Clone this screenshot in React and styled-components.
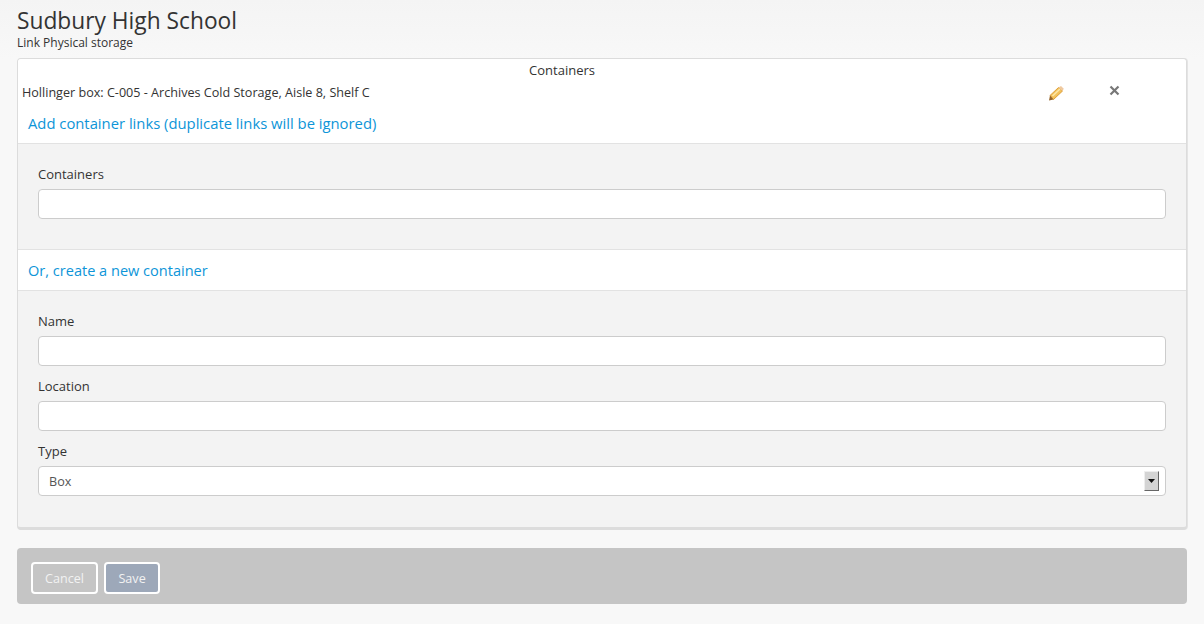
import React from 'react';
import styled, { createGlobalStyle } from 'styled-components';

const GlobalStyle = createGlobalStyle`
  html, body {
    margin: 0;
    padding: 0;
    height: 100%;
    background: #f8f8f8;
  }
  body {
    font-family: "Open Sans", "Liberation Sans", sans-serif;
    font-size: 12px;
    color: #333;
  }
`;

const Page = styled.div`
  box-sizing: border-box;
  height: 624px;
  padding: 6px 17px 0;
  background: linear-gradient(180deg, #f4f4f4 0, #f8f8f8 60px);
  overflow: hidden;
`;

const Title = styled.h1`
  margin: 0;
  font-size: 22.75px;
  font-weight: 400;
  line-height: 30px;
  color: #333;
`;

const Subtitle = styled.div`
  font-size: 12px;
  line-height: 14px;
  margin-bottom: 8px;
`;

const Card = styled.div`
  box-sizing: border-box;
  height: 472px;
  background: #f3f3f3;
  border: 1px solid #dcdcdc;
  border-bottom-width: 3px;
  border-right-width: 1px;
  box-shadow: 1px 0 0 #e4e4e4;
  border-radius: 4px;
  overflow: hidden;
`;

const LinkTable = styled.div`
  display: grid;
  grid-template-columns: 1020px 68px 1fr;
  background: #fff;
`;

const TableHead = styled.div`
  grid-column: 1 / 3;
  text-align: center;
  font-size: 13px;
  line-height: 22px;
`;

const Spacer = styled.div``;

const Cell = styled.div`
  display: flex;
  align-items: center;
  height: 22px;
  padding-left: ${(p) => p.$pad || 0}px;
  font-size: 12.6px;
`;

const Section = styled.div`
  background: #fff;
  color: #0d95d8;
  font-size: ${(p) => p.$size || 14.8}px;
  line-height: 19px;
  padding: ${(p) => p.$top}px 10px ${(p) => p.$bottom}px;
  border-bottom: 1px solid #e2e2e2;
  border-top: ${(p) => (p.$ruled ? '1px solid #e2e2e2' : 'none')};
`;

const Fieldset = styled.div`
  padding: ${(p) => p.$top}px 20px ${(p) => p.$bottom}px;
`;

const Label = styled.label`
  display: block;
  font-size: 13px;
  line-height: 18px;
  margin-bottom: 6px;
`;

const Field = styled.div`
  margin-bottom: ${(p) => p.$gap || 0}px;
`;

const Input = styled.input`
  display: block;
  box-sizing: border-box;
  width: 100%;
  height: 30px;
  border: 1px solid #ccc;
  border-radius: 4px;
  background: #fff;
  outline: none;
`;

const SelectBox = styled.div`
  box-sizing: border-box;
  display: flex;
  align-items: center;
  justify-content: space-between;
  height: 30px;
  padding: 0 6px 0 10px;
  border: 1px solid #ccc;
  border-radius: 4px;
  background: #fff;
  font-size: 12.6px;
  color: #555;
`;

const SelectArrow = styled.span`
  box-sizing: border-box;
  display: flex;
  align-items: center;
  justify-content: center;
  width: 15px;
  height: 20px;
  background: #d4d4d4;
  border-style: solid;
  border-width: 1px;
  border-color: #eee #666 #666 #eee;
`;

const ActionBar = styled.div`
  box-sizing: border-box;
  display: flex;
  gap: 6px;
  height: 56px;
  margin-top: 18px;
  padding: 14px 14px;
  background: #c5c5c5;
  border-radius: 4px;
`;

const Button = styled.button`
  box-sizing: border-box;
  height: 32px;
  padding: 0 ${(p) => (p.$primary ? 12.5 : 12)}px;
  border: 2px solid #fff;
  border-radius: 4px;
  background: ${(p) => (p.$primary ? '#9da8b9' : 'transparent')};
  color: #f2f2f2;
  font-family: inherit;
  font-size: 12.6px;
`;

const CloseIcon = styled.svg`
  margin-bottom: 3px;
`;

const PencilIcon = styled.svg`
  margin-top: 2px;
`;

const Pencil = () => (
  <PencilIcon width="16" height="16" viewBox="0 0 16 16">
    <path d="M2 10.5 L10.5 2.5 L14.5 6 L5.5 14.5 Z" fill="#f3c25c" stroke="#dd9f38" strokeWidth="1" />
    <path d="M4.5 11 L12 4" stroke="#fce7a8" strokeWidth="1.6" />
    <path d="M2 10.5 L5.5 14.5 L1 15.5 Z" fill="#95642a" />
    <path d="M10.5 2.5 L13 1 L15.8 3.8 L14.5 6 Z" fill="#efc9a0" />
  </PencilIcon>
);

const Close = () => (
  <CloseIcon width="11" height="11" viewBox="0 0 11 11">
    <path d="M1.5 1.5 L9.5 9.5 M9.5 1.5 L1.5 9.5" stroke="#777" strokeWidth="2.2" />
  </CloseIcon>
);

const App = () => (
  <>
    <GlobalStyle />
    <Page>
      <Title>Sudbury High School</Title>
      <Subtitle>Link Physical storage</Subtitle>
      <Card>
        <LinkTable>
          <TableHead>Containers</TableHead>
          <Spacer />
          <Cell $pad={4}>Hollinger box: C-005 - Archives Cold Storage, Aisle 8, Shelf C</Cell>
          <Cell $pad={10}><Pencil /></Cell>
          <Cell $pad={3}><Close /></Cell>
        </LinkTable>
        <Section $top={11} $bottom={10}>Add container links (duplicate links will be ignored)</Section>
        <Fieldset $top={21} $bottom={30}>
          <Field>
            <Label>Containers</Label>
            <Input />
          </Field>
        </Fieldset>
        <Section $ruled $size={14.55} $top={11} $bottom={10}>Or, create a new container</Section>
        <Fieldset $top={21} $bottom={0}>
          <Field $gap={11}>
            <Label>Name</Label>
            <Input />
          </Field>
          <Field $gap={11}>
            <Label>Location</Label>
            <Input />
          </Field>
          <Field>
            <Label>Type</Label>
            <SelectBox>
              Box
              <SelectArrow>
                <svg width="7" height="4" viewBox="0 0 7 4"><path d="M0 0 H7 L3.5 4 Z" fill="#111" /></svg>
              </SelectArrow>
            </SelectBox>
          </Field>
        </Fieldset>
      </Card>
      <ActionBar>
        <Button>Cancel</Button>
        <Button $primary>Save</Button>
      </ActionBar>
    </Page>
  </>
);

export default App;
